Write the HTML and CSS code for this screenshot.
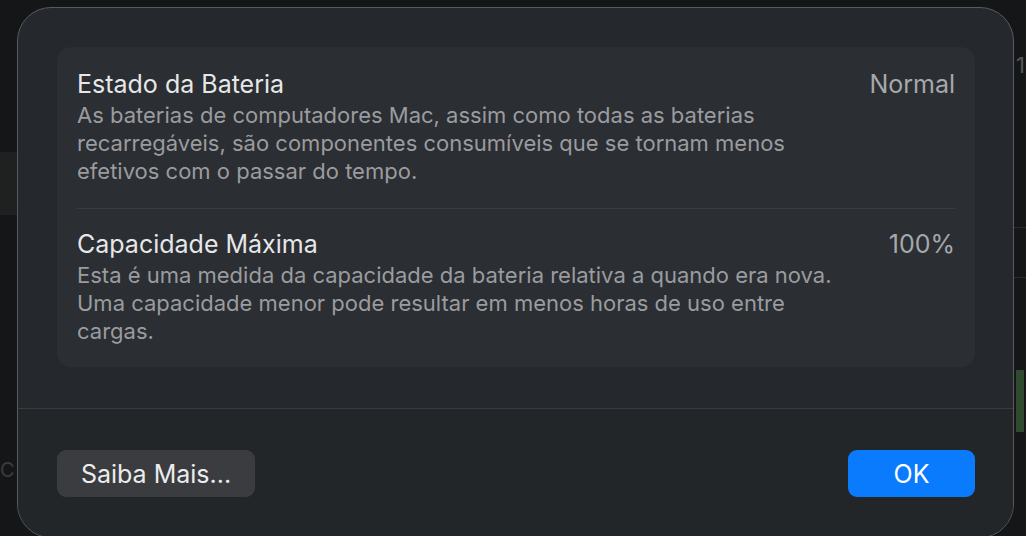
FILE: index.html
```html
<!DOCTYPE html>
<html lang="pt">

<head>
    <meta charset="UTF-8">
    <title>Bateria</title>
    <link rel="stylesheet" href="styles.css">
</head>

<body>
    <div class="desk">
        <div class="desk-band"></div>
        <span class="desk-c">C</span>
        <span class="desk-one">1</span>
        <div class="desk-line line-a"></div>
        <div class="desk-line line-b"></div>
        <div class="desk-green"></div>
    </div>

    <div class="dialog">
        <div class="dialog-body">
            <div class="card">
                <div class="row">
                    <div class="row-text">
                        <div class="row-title">Estado da Bateria</div>
                        <p class="row-desc">As baterias de computadores Mac, assim como todas as baterias<br>recarregáveis, são componentes consumíveis que se tornam menos<br>efetivos com o passar do tempo.</p>
                    </div>
                    <div class="row-value">Normal</div>
                </div>
                <div class="sep"></div>
                <div class="row row-two">
                    <div class="row-text">
                        <div class="row-title">Capacidade Máxima</div>
                        <p class="row-desc">Esta é uma medida da capacidade da bateria relativa a quando era nova.<br>Uma capacidade menor pode resultar em menos horas de uso entre<br>cargas.</p>
                    </div>
                    <div class="row-value">100%</div>
                </div>
            </div>
        </div>
        <div class="dialog-foot">
            <button class="btn btn-more">Saiba Mais...</button>
            <button class="btn btn-ok">OK</button>
        </div>
    </div>
</body>

</html>
```

FILE: styles.css
```css
* {
    margin: 0;
    padding: 0;
    box-sizing: border-box;
}

body {
    width: 1026px;
    height: 536px;
    overflow: hidden;
    background-color: #151617;
    font-family: Inter, "Noto Sans", sans-serif;
    position: relative;
}

/* bits of the desktop behind the sheet */
.desk-band {
    position: absolute;
    left: 0;
    top: 152px;
    width: 17px;
    height: 63px;
    background-color: #1f2120;
}

.desk-c {
    position: absolute;
    left: 0;
    top: 458px;
    font-size: 20px;
    color: #3b3d3f;
}

.desk-one {
    position: absolute;
    left: 1016px;
    top: 52px;
    font-size: 22px;
    color: #55585b;
}

.desk-line {
    position: absolute;
    left: 1014px;
    width: 12px;
    height: 1px;
    background-color: #2a2c2e;
}

.line-a {
    top: 227px;
}

.line-b {
    top: 277px;
}

.desk-green {
    position: absolute;
    left: 1016px;
    top: 370px;
    width: 8px;
    height: 62px;
    background-color: #2f4a2f;
}

.dialog {
    position: relative;
    margin: 7px 0 0 17px;
    width: 997px;
    height: 531px;
    border: 1px solid #585b5e;
    border-radius: 34px;
    background-color: #25282c;
    overflow: hidden;
    display: flex;
    flex-direction: column;
}

.dialog-body {
    padding: 39px 38px 41px 39px;
    border-bottom: 1px solid #393c3f;
}

.card {
    background-color: #2b2e33;
    border-radius: 14px;
    padding: 0 20px;
}

.row {
    display: flex;
    justify-content: space-between;
    align-items: flex-start;
    padding: 23px 0 23px;
}

.row-two {
    padding: 21px 0 22px;
}

.row-title {
    font-size: 25px;
    line-height: 28px;
    color: #e6e7e8;
}

.row-desc {
    font-size: 22px;
    line-height: 28px;
    color: #9a9c9f;
    margin-top: 3px;
}

.row-value {
    font-size: 25px;
    line-height: 28px;
    color: #a6a8ab;
}

.sep {
    height: 1px;
    background-color: #393c40;
}

.dialog-foot {
    display: flex;
    justify-content: space-between;
    align-items: flex-start;
    padding: 41px 38px 0 39px;
    flex: 1;
    background-color: #232629;
}

.btn {
    border: none;
    border-radius: 9px;
    height: 47px;
    font-family: Inter, "Noto Sans", sans-serif;
    font-size: 25px;
    color: #ececec;
}

.btn-more {
    width: 198px;
    background-color: #3a3c3f;
}

.btn-ok {
    width: 127px;
    background-color: #0b7bfe;
    color: #ffffff;
}
```
